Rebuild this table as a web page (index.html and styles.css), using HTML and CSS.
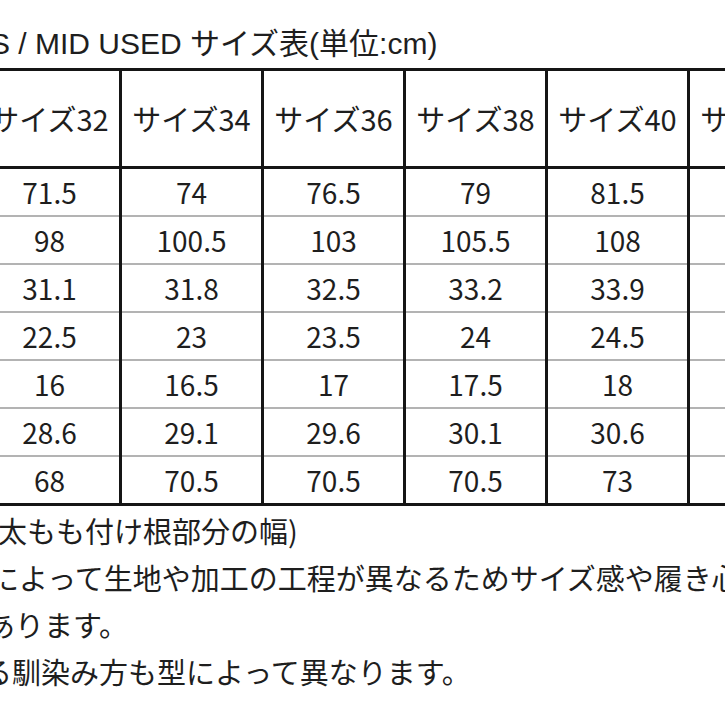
FILE: index.html
```html
<!DOCTYPE html>
<html lang="ja">
<head>
<meta charset="utf-8">
<link rel="stylesheet" href="styles.css">
</head>
<body>
<div class="sheet">
  <div class="title">S / MID USED サイズ表(単位:cm)</div>
  <table class="chart">
    <colgroup>
      <col class="c"><col class="c"><col class="c"><col class="c"><col class="c"><col class="c">
    </colgroup>
    <thead>
      <tr><th>サイズ32</th><th>サイズ34</th><th>サイズ36</th><th>サイズ38</th><th>サイズ40</th><th>サイズ42</th></tr>
    </thead>
    <tbody>
      <tr><td>71.5</td><td>74</td><td>76.5</td><td>79</td><td>81.5</td><td>84</td></tr>
      <tr><td>98</td><td>100.5</td><td>103</td><td>105.5</td><td>108</td><td>110.5</td></tr>
      <tr><td>31.1</td><td>31.8</td><td>32.5</td><td>33.2</td><td>33.9</td><td>34.6</td></tr>
      <tr><td>22.5</td><td>23</td><td>23.5</td><td>24</td><td>24.5</td><td>25</td></tr>
      <tr><td>16</td><td>16.5</td><td>17</td><td>17.5</td><td>18</td><td>18.5</td></tr>
      <tr><td>28.6</td><td>29.1</td><td>29.6</td><td>30.1</td><td>30.6</td><td>31.1</td></tr>
      <tr><td>68</td><td>70.5</td><td>70.5</td><td>70.5</td><td>73</td><td>73</td></tr>
    </tbody>
  </table>
  <div class="notes">
    <p class="note n1">太もも付け根部分の幅)</p>
    <p class="note n2">によって生地や加工の工程が異なるためサイズ感や履き心</p>
    <p class="note n3">あります。</p>
    <p class="note n4">る馴染み方も型によって異なります。</p>
  </div>
</div>
</body>
</html>
```
FILE: styles.css
```css
html, body {
  margin: 0;
  padding: 0;
  background: #ffffff;
  width: 725px;
  height: 725px;
  overflow: hidden;
}
.sheet {
  font-family: "Noto Sans CJK JP", "Noto Sans", sans-serif;
  color: #1e1e1e;
  font-size: 28px;
  width: 725px;
  overflow: hidden;
}
.title {
  font-family: "Liberation Sans", "Noto Sans CJK JP", sans-serif;
  font-size: 30px;
  margin-top: 20px;
  margin-left: -10px;
  height: 48px;
  line-height: 48px;
  white-space: nowrap;
}
.chart {
  margin-left: -23px;
  border-collapse: collapse;
  table-layout: fixed;
  width: 852px;
}
.chart .c { width: 142px; }
.chart th, .chart td {
  padding: 0;
  text-align: center;
  font-weight: 400;
  white-space: nowrap;
  border-left: 3px solid #151515;
  border-right: 3px solid #151515;
}
.chart th {
  height: 95px;
  font-size: 29px;
  border-top: 3px solid #151515;
  border-bottom: 3px solid #151515;
  line-height: 1;
}
.chart td {
  height: 46px;
  line-height: 1;
  border-bottom: 2px solid #b3b3b3;
}
.chart tbody tr:last-child td {
  border-bottom: 3px solid #151515;
}
.notes {
  margin-top: 1px;
  white-space: nowrap;
  font-size: 29px;
}
.note {
  margin: 0;
  height: 47px;
  line-height: 47px;
}
.n1 { margin-left: -2px; }
.n2 { margin-left: -10px; }
.n3 { margin-left: -14px; }
.n4 { margin-left: -17px; }
```
